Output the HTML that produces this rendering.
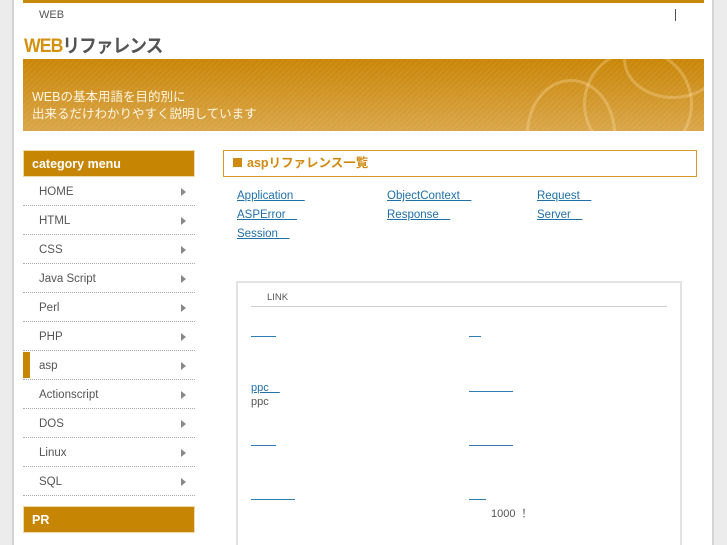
<!DOCTYPE html>
<html><head><meta charset="utf-8"><style>
*{margin:0;padding:0;box-sizing:border-box}
html,body{width:727px;height:545px;overflow:hidden}
body{background:#ececec;font-family:"Liberation Sans","Noto Sans CJK JP",sans-serif;position:relative}
.page{position:absolute;left:12px;top:0;width:702px;height:545px;background:#fff;border-left:2px solid #d4d4d4;border-right:2px solid #d4d4d4}
.a{position:absolute}
.topbar{left:23px;top:0;width:681px;height:3px;background:#c98a0c}
.banner{left:23px;top:59px;width:681px;height:72px;background:repeating-linear-gradient(135deg,rgba(255,255,255,.05) 0 2px,transparent 2px 4px),linear-gradient(#c98505,#d9a548);overflow:hidden}
.banner .t{position:absolute;left:9px;top:30px;color:#fff7e6;font-size:12.5px;line-height:17px}
.circ{position:absolute;border:3px solid rgba(255,230,180,.3);border-radius:50%}
.hdr{background:#c68503;color:#fff;font-weight:bold;font-size:12.5px;padding-left:8px;line-height:26px;border:1px solid #f0d8a8}
.menu{left:23px;top:177px;width:172px}
.menu div{height:29px;border-bottom:1px dotted #aaa;font-size:11.5px;color:#555;line-height:30px;padding-left:16px;position:relative}
.menu div:after{content:"";position:absolute;right:9px;top:11px;border-left:5px solid #888;border-top:4px solid transparent;border-bottom:4px solid transparent}
.menu div.on:before{content:"";position:absolute;left:0;top:1px;width:7px;height:26px;background:#c68503}
a{color:#1f6fa8;text-decoration:underline;font-size:11.5px}
.box{left:236px;top:281px;width:446px;height:270px;border:2px solid #e2e2e2}
.u{position:absolute;height:1px;background:#2d7db5}
</style></head><body>
<div class="page"></div>
<div class="a topbar"></div>
<div class="a" style="left:39px;top:9px;font-size:11px;color:#555">WEB</div>
<div class="a" style="left:675px;top:9px;width:1px;height:12px;background:#555"></div>
<div class="a" style="left:24px;top:31px;font-size:19px;font-weight:bold;letter-spacing:-1px;transform:scaleX(0.93);transform-origin:left;white-space:nowrap"><span style="color:#d4900f">WEB</span><span style="color:#555">リファレンス</span></div>
<div class="a banner">
<div class="circ" style="left:503px;top:20px;width:90px;height:110px"></div>
<div class="circ" style="left:560px;top:-10px;width:110px;height:110px"></div>
<div class="circ" style="left:600px;top:-40px;width:100px;height:80px"></div>
<div class="t">WEBの基本用語を目的別に<br>出来るだけわかりやすく説明しています</div></div>
<div class="a hdr" style="left:23px;top:150px;width:172px;height:27px">category menu</div>
<div class="a menu">
<div>HOME</div><div>HTML</div><div>CSS</div><div>Java Script</div><div>Perl</div><div>PHP</div><div class="on">asp</div><div>Actionscript</div><div>DOS</div><div>Linux</div><div>SQL</div></div>
<div class="a hdr" style="left:23px;top:506px;width:172px;height:27px">PR</div>
<div class="a" style="left:223px;top:150px;width:474px;height:27px;border:1px solid #d8982a;color:#d08a10;font-weight:bold;font-size:12.5px;line-height:25px;padding-left:9px"><span style="display:inline-block;width:9px;height:9px;background:#d08a10;margin-right:5px"></span>aspリファレンス一覧</div>
<a class="a" style="left:237px;top:187px">Application　 </a>
<a class="a" style="left:387px;top:187px">ObjectContext　 </a>
<a class="a" style="left:537px;top:187px">Request　 </a>
<a class="a" style="left:237px;top:206px">ASPError　 </a>
<a class="a" style="left:387px;top:206px">Response　 </a>
<a class="a" style="left:537px;top:206px">Server　 </a>
<a class="a" style="left:237px;top:225px">Session　 </a>
<div class="a box"></div>
<div class="a" style="left:267px;top:292px;font-size:9.5px;color:#555">LINK</div>
<div class="a" style="left:251px;top:306px;width:416px;height:1px;background:#ccc"></div>
<div class="u" style="left:251px;top:336px;width:25px"></div>
<div class="u" style="left:469px;top:336px;width:12px"></div>
<a class="a" style="left:251px;top:379px;font-size:11px">ppc　</a>
<div class="a" style="left:251px;top:396px;font-size:11px;color:#555">ppc</div>
<div class="u" style="left:469px;top:391px;width:44px"></div>
<div class="u" style="left:251px;top:445px;width:25px"></div>
<div class="u" style="left:469px;top:445px;width:44px"></div>
<div class="u" style="left:251px;top:499px;width:44px"></div>
<div class="u" style="left:469px;top:499px;width:17px"></div>
<div class="a" style="left:491px;top:505px;font-size:11px;color:#555">1000 ！</div>
</body></html>
